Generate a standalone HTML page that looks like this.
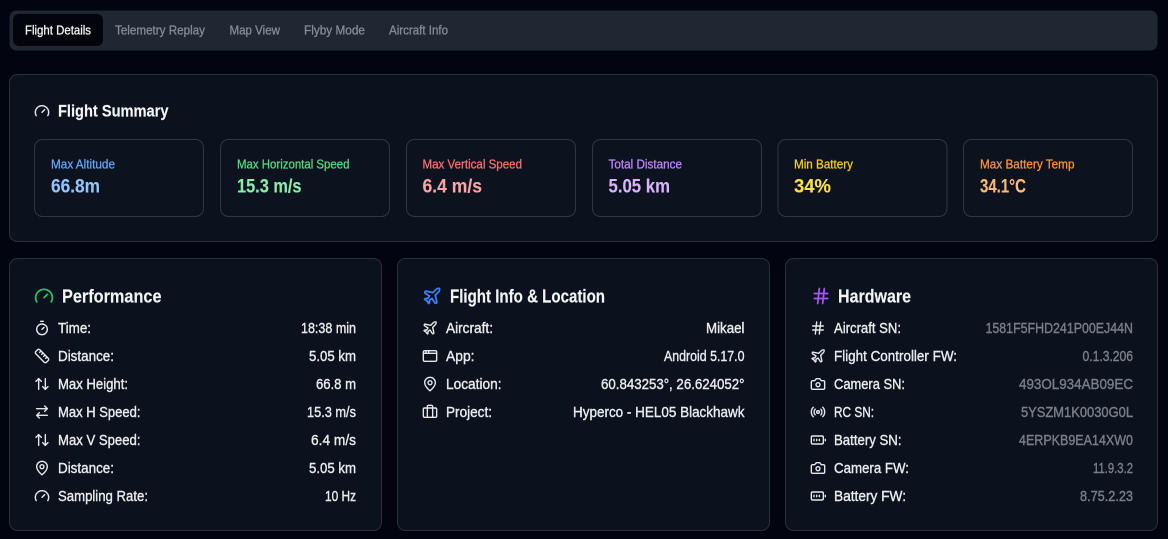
<!DOCTYPE html>
<html lang="en"><head><meta charset="utf-8"><title>Flight Details</title>
<style>
html,body{margin:0;padding:0;width:1168px;height:539px;overflow:hidden;background:#02040f}
svg{display:block}
body>svg{position:absolute;left:0;top:0;filter:blur(.35px)}
text{font-family:"Liberation Sans",sans-serif;font-size:14.4px;fill:#e8eaee;stroke:#e8eaee;stroke-width:.38px}
.tab{font-size:13px;fill:#878c95;stroke:#878c95;stroke-width:.3px}
.h{font-size:18.5px;font-weight:bold;stroke:#f3f4f6;stroke-width:.15px;fill:#f3f4f6}
.l{font-size:13px;stroke-width:.28px}
.v{font-size:19px;font-weight:bold;stroke-width:.1px}
.g{fill:#7a7f87;stroke:#7a7f87}
.i{fill:none;stroke:#e5e7eb;stroke-width:2.1;stroke-linecap:round;stroke-linejoin:round}
.p{fill:#0b121e;stroke:#29303c;stroke-width:1}
.s{fill:#0c131f;stroke:#2f3745;stroke-width:1}
</style></head><body>
<svg width="1168" height="539" viewBox="0 0 1168 539" xmlns="http://www.w3.org/2000/svg">
<defs>
<symbol id="gauge" viewBox="0 0 24 24"><path d="m12 14 4-4"/><path d="M3.34 19a10 10 0 1 1 17.32 0"/></symbol>
<symbol id="timer" viewBox="0 0 24 24"><path d="M10 2h4"/><path d="m12 14 3-3"/><circle cx="12" cy="14" r="8"/></symbol>
<symbol id="ruler" viewBox="0 0 24 24"><path d="M21.3 15.3a2.4 2.4 0 0 1 0 3.4l-2.6 2.6a2.4 2.4 0 0 1-3.4 0L2.7 8.7a2.41 2.41 0 0 1 0-3.4l2.6-2.6a2.41 2.41 0 0 1 3.4 0Z"/><path d="m14.5 12.5 2-2"/><path d="m11.5 9.5 2-2"/><path d="m8.5 6.5 2-2"/><path d="m17.5 15.5 2-2"/></symbol>
<symbol id="updown" viewBox="0 0 24 24"><path d="m21 16-4 4-4-4"/><path d="M17 20V4"/><path d="m3 8 4-4 4 4"/><path d="M7 4v16"/></symbol>
<symbol id="lr" viewBox="0 0 24 24"><path d="m16 3 4 4-4 4"/><path d="M20 7H4"/><path d="m8 21-4-4 4-4"/><path d="M4 17h16"/></symbol>
<symbol id="pin" viewBox="0 0 24 24"><path d="M20 10c0 4.993-5.539 10.193-7.399 11.799a1 1 0 0 1-1.202 0C9.539 20.193 4 14.993 4 10a8 8 0 0 1 16 0"/><circle cx="12" cy="10" r="3"/></symbol>
<symbol id="plane" viewBox="0 0 24 24"><path d="M17.8 19.2 16 11l3.5-3.5C21 6 21.5 4 21 3c-1-.5-3 0-4.5 1.5L13 8 4.8 6.2c-.5-.1-.9.1-1.1.5l-.3.5c-.2.5-.1 1 .3 1.3L9 12l-2 3H4l-1 1 3 2 2 3 1-1v-3l3-2 3.5 5.3c.3.4.8.5 1.3.3l.5-.2c.4-.3.6-.7.5-1.2z"/></symbol>
<symbol id="app" viewBox="0 0 24 24"><rect x="2" y="4" width="20" height="16" rx="2"/><path d="M10 4v4"/><path d="M2 8h20"/><path d="M6 4v4"/></symbol>
<symbol id="case" viewBox="0 0 24 24"><path d="M16 20V4a2 2 0 0 0-2-2h-4a2 2 0 0 0-2 2v16"/><rect x="2" y="6" width="20" height="14" rx="2"/></symbol>
<symbol id="hash" viewBox="0 0 24 24"><path d="M4 9h16"/><path d="M4 15h16"/><path d="M10 3 8 21"/><path d="M16 3l-2 18"/></symbol>
<symbol id="cam" viewBox="0 0 24 24"><path d="M14.5 4h-5L7 7H4a2 2 0 0 0-2 2v9a2 2 0 0 0 2 2h16a2 2 0 0 0 2-2V9a2 2 0 0 0-2-2h-3l-2.5-3z"/><circle cx="12" cy="13" r="3"/></symbol>
<symbol id="radio" viewBox="0 0 24 24"><path d="M4.9 19.1C1 15.2 1 8.8 4.9 4.9"/><path d="M7.8 16.2c-2.3-2.3-2.3-6.1 0-8.5"/><circle cx="12" cy="12" r="2"/><path d="M16.2 7.8c2.3 2.3 2.3 6.1 0 8.5"/><path d="M19.1 4.9C23 8.8 23 15.1 19.1 19"/></symbol>
<symbol id="batt" viewBox="0 0 24 24"><rect x="2" y="6" width="18" height="12" rx="2"/><path d="M6 11v2"/><path d="M10 11v2"/><path d="M14 11v2"/><path d="M23 11v2"/></symbol>
</defs>

<rect x="9.5" y="10.5" width="1148" height="40" rx="7" fill="#1f2733"/>
<rect x="13" y="14" width="90" height="32" rx="6" fill="#03050d"/>
<text class="tab" x="25" y="34.5" textLength="66" lengthAdjust="spacingAndGlyphs" style="fill:#f3f4f6;stroke:#f3f4f6">Flight Details</text>
<text class="tab" x="115" y="34.5" textLength="90" lengthAdjust="spacingAndGlyphs">Telemetry Replay</text>
<text class="tab" x="229.5" y="34.5" textLength="50.5" lengthAdjust="spacingAndGlyphs">Map View</text>
<text class="tab" x="304" y="34.5" textLength="61" lengthAdjust="spacingAndGlyphs">Flyby Mode</text>
<text class="tab" x="389" y="34.5" textLength="59" lengthAdjust="spacingAndGlyphs">Aircraft Info</text>

<rect class="p" x="9.5" y="74.5" width="1148" height="167" rx="8"/>
<svg x="34" y="103" width="16" height="16" class="i"><use href="#gauge"/></svg>
<text class="h" style="font-size:17px" x="58" y="116.5" textLength="110.5" lengthAdjust="spacingAndGlyphs">Flight Summary</text>

<rect class="s" x="34.5" y="139.5" width="169" height="77" rx="8"/>
<rect class="s" x="220.5" y="139.5" width="169" height="77" rx="8"/>
<rect class="s" x="406.5" y="139.5" width="169" height="77" rx="8"/>
<rect class="s" x="592.5" y="139.5" width="169" height="77" rx="8"/>
<rect class="s" x="778" y="139.5" width="169" height="77" rx="8"/>
<rect class="s" x="963.5" y="139.5" width="169" height="77" rx="8"/>

<text class="l" x="51" y="168.5" textLength="64" lengthAdjust="spacingAndGlyphs" style="fill:#60a5fa;stroke:#60a5fa">Max Altitude</text>
<text class="l" x="237" y="168.5" textLength="112.5" lengthAdjust="spacingAndGlyphs" style="fill:#4ade80;stroke:#4ade80">Max Horizontal Speed</text>
<text class="l" x="422.5" y="168.5" textLength="99.5" lengthAdjust="spacingAndGlyphs" style="fill:#f87171;stroke:#f87171">Max Vertical Speed</text>
<text class="l" x="608.5" y="168.5" textLength="73.5" lengthAdjust="spacingAndGlyphs" style="fill:#c084fc;stroke:#c084fc">Total Distance</text>
<text class="l" x="794" y="168.5" textLength="59" lengthAdjust="spacingAndGlyphs" style="fill:#facc15;stroke:#facc15">Min Battery</text>
<text class="l" x="980" y="168.5" textLength="94.5" lengthAdjust="spacingAndGlyphs" style="fill:#fb923c;stroke:#fb923c">Max Battery Temp</text>

<text class="v" x="51" y="192.5" textLength="49" lengthAdjust="spacingAndGlyphs" style="fill:#93c5fd;stroke:#93c5fd">66.8m</text>
<text class="v" x="237" y="192.5" textLength="64.5" lengthAdjust="spacingAndGlyphs" style="fill:#86efac;stroke:#86efac">15.3 m/s</text>
<text class="v" x="422.5" y="192.5" textLength="59.5" lengthAdjust="spacingAndGlyphs" style="fill:#fca5a5;stroke:#fca5a5">6.4 m/s</text>
<text class="v" x="608.5" y="192.5" textLength="61.5" lengthAdjust="spacingAndGlyphs" style="fill:#d8b4fe;stroke:#d8b4fe">5.05 km</text>
<text class="v" x="794" y="192.5" textLength="37" lengthAdjust="spacingAndGlyphs" style="fill:#fde047;stroke:#fde047">34%</text>
<text class="v" x="980" y="192.5" textLength="46" lengthAdjust="spacingAndGlyphs" style="fill:#fdba74;stroke:#fdba74">34.1°C</text>

<rect class="p" x="9.5" y="258.5" width="372" height="272" rx="8"/>
<rect class="p" x="397.5" y="258.5" width="372" height="272" rx="8"/>
<rect class="p" x="785.5" y="258.5" width="372" height="272" rx="8"/>

<svg x="34" y="286" width="20" height="20" class="i" style="stroke:#22c55e"><use href="#gauge"/></svg>
<text class="h" x="62" y="302.5" textLength="99.5" lengthAdjust="spacingAndGlyphs">Performance</text>
<svg x="34" y="320" width="16" height="16" class="i"><use href="#timer"/></svg>
<svg x="34" y="348" width="16" height="16" class="i"><use href="#ruler"/></svg>
<svg x="34" y="376" width="16" height="16" class="i"><use href="#updown"/></svg>
<svg x="34" y="404" width="16" height="16" class="i"><use href="#lr"/></svg>
<svg x="34" y="432" width="16" height="16" class="i"><use href="#updown"/></svg>
<svg x="34" y="460" width="16" height="16" class="i"><use href="#pin"/></svg>
<svg x="34" y="488" width="16" height="16" class="i"><use href="#gauge"/></svg>
<text x="58" y="333" textLength="33" lengthAdjust="spacingAndGlyphs">Time:</text><text x="301" y="333" textLength="55" lengthAdjust="spacingAndGlyphs">18:38 min</text>
<text x="58" y="361" textLength="56" lengthAdjust="spacingAndGlyphs">Distance:</text><text x="309" y="361" textLength="47" lengthAdjust="spacingAndGlyphs">5.05 km</text>
<text x="58" y="389" textLength="70" lengthAdjust="spacingAndGlyphs">Max Height:</text><text x="316" y="389" textLength="40" lengthAdjust="spacingAndGlyphs">66.8 m</text>
<text x="58" y="417" textLength="82.5" lengthAdjust="spacingAndGlyphs">Max H Speed:</text><text x="307" y="417" textLength="49" lengthAdjust="spacingAndGlyphs">15.3 m/s</text>
<text x="58" y="445" textLength="82.5" lengthAdjust="spacingAndGlyphs">Max V Speed:</text><text x="311" y="445" textLength="45" lengthAdjust="spacingAndGlyphs">6.4 m/s</text>
<text x="58" y="473" textLength="56" lengthAdjust="spacingAndGlyphs">Distance:</text><text x="309" y="473" textLength="47" lengthAdjust="spacingAndGlyphs">5.05 km</text>
<text x="58" y="501" textLength="90" lengthAdjust="spacingAndGlyphs">Sampling Rate:</text><text x="325" y="501" textLength="31" lengthAdjust="spacingAndGlyphs">10 Hz</text>

<svg x="422" y="286" width="20" height="20" class="i" style="stroke:#3b82f6"><use href="#plane"/></svg>
<text class="h" x="450" y="302.5" textLength="155" lengthAdjust="spacingAndGlyphs">Flight Info &amp; Location</text>
<svg x="422" y="320" width="16" height="16" class="i"><use href="#plane"/></svg>
<svg x="422" y="348" width="16" height="16" class="i"><use href="#app"/></svg>
<svg x="422" y="376" width="16" height="16" class="i"><use href="#pin"/></svg>
<svg x="422" y="404" width="16" height="16" class="i"><use href="#case"/></svg>
<text x="446" y="333" textLength="47" lengthAdjust="spacingAndGlyphs">Aircraft:</text><text x="706" y="333" textLength="38.5" lengthAdjust="spacingAndGlyphs">Mikael</text>
<text x="446" y="361" textLength="28.5" lengthAdjust="spacingAndGlyphs">App:</text><text x="664" y="361" textLength="80.5" lengthAdjust="spacingAndGlyphs">Android 5.17.0</text>
<text x="446" y="389" textLength="55.5" lengthAdjust="spacingAndGlyphs">Location:</text><text x="601" y="389" textLength="143.5" lengthAdjust="spacingAndGlyphs">60.843253°, 26.624052°</text>
<text x="446" y="417" textLength="46" lengthAdjust="spacingAndGlyphs">Project:</text><text x="573" y="417" textLength="171.5" lengthAdjust="spacingAndGlyphs">Hyperco - HEL05 Blackhawk</text>

<svg x="811" y="286" width="20" height="20" class="i" style="stroke:#a855f7"><use href="#hash"/></svg>
<text class="h" x="838" y="302.5" textLength="73" lengthAdjust="spacingAndGlyphs">Hardware</text>
<svg x="810" y="320" width="16" height="16" class="i"><use href="#hash"/></svg>
<svg x="810" y="348" width="16" height="16" class="i"><use href="#plane"/></svg>
<svg x="810" y="376" width="16" height="16" class="i"><use href="#cam"/></svg>
<svg x="810" y="404" width="16" height="16" class="i"><use href="#radio"/></svg>
<svg x="810" y="432" width="16" height="16" class="i"><use href="#batt"/></svg>
<svg x="810" y="460" width="16" height="16" class="i"><use href="#cam"/></svg>
<svg x="810" y="488" width="16" height="16" class="i"><use href="#batt"/></svg>
<text x="834" y="333" textLength="67" lengthAdjust="spacingAndGlyphs">Aircraft SN:</text><text class="g" x="985.5" y="333" textLength="147.5" lengthAdjust="spacingAndGlyphs">1581F5FHD241P00EJ44N</text>
<text x="834" y="361" textLength="123" lengthAdjust="spacingAndGlyphs">Flight Controller FW:</text><text class="g" x="1082.5" y="361" textLength="50.5" lengthAdjust="spacingAndGlyphs">0.1.3.206</text>
<text x="834" y="389" textLength="71" lengthAdjust="spacingAndGlyphs">Camera SN:</text><text class="g" x="1019" y="389" textLength="114" lengthAdjust="spacingAndGlyphs">493OL934AB09EC</text>
<text x="834" y="417" textLength="40" lengthAdjust="spacingAndGlyphs">RC SN:</text><text class="g" x="1021" y="417" textLength="112" lengthAdjust="spacingAndGlyphs">5YSZM1K0030G0L</text>
<text x="834" y="445" textLength="67.5" lengthAdjust="spacingAndGlyphs">Battery SN:</text><text class="g" x="1019" y="445" textLength="114" lengthAdjust="spacingAndGlyphs">4ERPKB9EA14XW0</text>
<text x="834" y="473" textLength="75" lengthAdjust="spacingAndGlyphs">Camera FW:</text><text class="g" x="1093" y="473" textLength="40" lengthAdjust="spacingAndGlyphs">11.9.3.2</text>
<text x="834" y="501" textLength="72" lengthAdjust="spacingAndGlyphs">Battery FW:</text><text class="g" x="1080" y="501" textLength="53" lengthAdjust="spacingAndGlyphs">8.75.2.23</text>
</svg>
</body></html>
